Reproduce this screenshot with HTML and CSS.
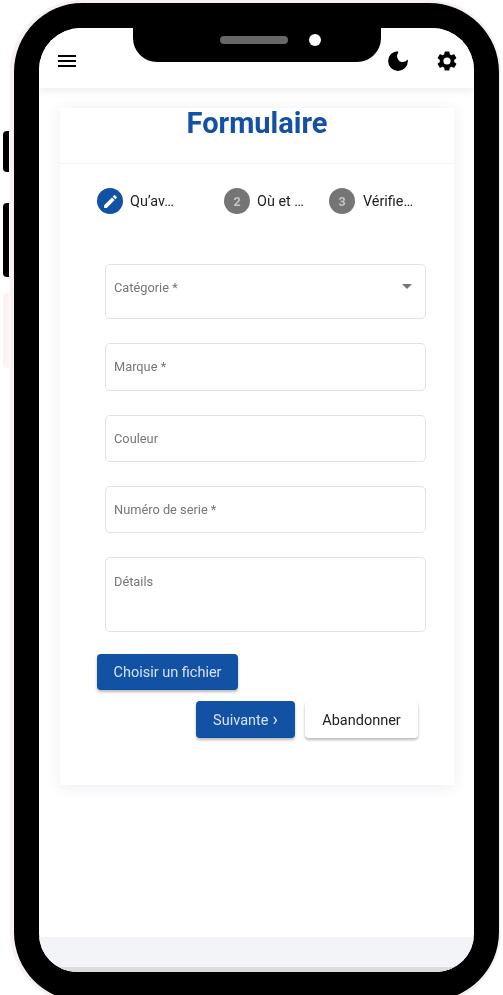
FILE: index.html
```html
<!DOCTYPE html>
<html lang="fr">
<head>
<meta charset="utf-8">
<title>Formulaire</title>
<link rel="stylesheet" href="styles.css">
</head>
<body>
<div class="device">
  <span class="side side-a"></span>
  <span class="side side-b"></span>
  <span class="side side-c"></span>
  <div class="notch"><span class="speaker"></span><span class="camera"></span></div>
  <div class="screen">
    <header class="topbar">
      <svg class="icon" viewBox="0 0 24 24"><path d="M3 18h18v-2H3v2zm0-5h18v-2H3v2zm0-7v2h18V6H3z"/></svg>
      <div class="topbar-right">
        <svg class="icon" viewBox="0 0 24 24"><path d="M12 2.2a9.9 9.9 0 1 0 9.9 9.9c0-.5-.04-1-.11-1.5a5.9 5.9 0 0 1-4.8 2.4 5.9 5.9 0 0 1-4.6-9.6c-.13-.2-.26-.2-.39-.2z"/></svg>
        <svg class="icon" viewBox="0 0 24 24"><path d="M19.14 12.94c.04-.3.06-.61.06-.94s-.02-.64-.07-.94l2.03-1.58a.49.49 0 0 0 .12-.61l-1.92-3.32a.49.49 0 0 0-.59-.22l-2.39.96c-.5-.38-1.03-.7-1.62-.94l-.36-2.54a.48.48 0 0 0-.48-.41h-3.84a.47.47 0 0 0-.47.41l-.36 2.54c-.59.24-1.13.57-1.62.94l-2.39-.96a.49.49 0 0 0-.59.22L2.74 8.87a.47.47 0 0 0 .12.61l2.03 1.58c-.05.3-.09.63-.09.94s.02.64.07.94l-2.03 1.58a.49.49 0 0 0-.12.61l1.92 3.32c.12.22.37.29.59.22l2.39-.96c.5.38 1.03.7 1.62.94l.36 2.54c.05.24.24.41.48.41h3.84c.24 0 .44-.17.47-.41l.36-2.54c.59-.24 1.13-.56 1.62-.94l2.39.96c.22.08.47 0 .59-.22l1.92-3.32a.47.47 0 0 0-.12-.61l-2.01-1.58zM12 15.6A3.6 3.6 0 1 1 12 8.4a3.6 3.6 0 0 1 0 7.2z"/></svg>
      </div>
    </header>
    <main class="card">
      <h1 class="title">Formulaire</h1>
      <div class="stepper">
        <div class="step step-one">
          <span class="badge badge-active"><svg class="pencil" viewBox="0 0 24 24"><path d="M3 17.25V21h3.75L17.81 9.94l-3.75-3.75L3 17.25zM20.71 7.04a1 1 0 0 0 0-1.41l-2.34-2.34a1 1 0 0 0-1.41 0l-1.83 1.83 3.75 3.75 1.83-1.83z"/></svg></span>
          <span class="step-label">Qu’av…</span>
        </div>
        <div class="step step-two">
          <span class="badge">2</span>
          <span class="step-label">Où et …</span>
        </div>
        <div class="step step-three">
          <span class="badge">3</span>
          <span class="step-label">Vérifie…</span>
        </div>
      </div>
      <form class="form">
        <div class="field field-select">Catégorie *<span class="caret"></span></div>
        <div class="field field-marque">Marque *</div>
        <div class="field field-text">Couleur</div>
        <div class="field field-text">Numéro de serie *</div>
        <div class="field field-area">Détails</div>
      </form>
      <div class="file-row"><span class="btn btn-primary btn-file">Choisir un fichier</span></div>
      <div class="actions">
        <span class="btn btn-primary btn-next">Suivante <span class="chevron">›</span></span>
        <span class="btn btn-plain">Abandonner</span>
      </div>
    </main>
    <footer class="footer"></footer>
  </div>
</div>
</body>
</html>
```

FILE: styles.css
```css
* { box-sizing: border-box; }

html, body {
  margin: 0;
  height: 995px;
  overflow: hidden;
  background: #fff;
  font-family: Roboto, "Liberation Sans", sans-serif;
}

.device {
  position: relative;
  width: 491px;
  height: 1004px;
  margin-left: 10px;
  padding: 25px;
  background: #000;
  border: 3px solid #f6f0ef;
  border-width: 3px 2px 3px 4px;
  border-radius: 72px;
  filter: blur(.35px);
}

.side {
  position: absolute;
  left: -11px;
  width: 6px;
  background: #000;
  border-radius: 4px 0 0 4px;
}
.side-a { top: 128px; height: 41px; }
.side-b { top: 200px; height: 74px; }
.side-c { top: 290px; height: 75px; background: #fbf4f2; }

.notch {
  position: absolute;
  top: 25px;
  left: 119px;
  z-index: 2;
  width: 248px;
  height: 34px;
  display: flex;
  align-items: flex-start;
  background: #000;
  border-radius: 0 0 24px 24px;
}
.speaker {
  width: 68px;
  height: 8px;
  margin: 8px 0 0 87px;
  background: #666;
  border-radius: 4px;
}
.camera {
  width: 12px;
  height: 12px;
  margin: 6px 0 0 21px;
  background: #fff;
  border-radius: 50%;
}

.screen {
  display: flex;
  flex-direction: column;
  width: 435px;
  height: 944px;
  overflow: hidden;
  background: #fff;
  border-radius: 42px 42px 38px 38px;
}

.topbar {
  position: relative;
  display: flex;
  flex: none;
  justify-content: space-between;
  height: 60px;
  padding: 21px 15px 0 16px;
  background: #fff;
  box-shadow: 0 3px 8px rgba(40, 50, 90, .09);
}
.topbar-right { display: flex; gap: 25px; }
.icon { width: 24px; height: 24px; fill: #000; }

.card {
  flex: none;
  width: 394px;
  height: 677px;
  margin: 20px 0 0 21px;
  background: #fff;
  box-shadow: 0 2px 14px rgba(50, 60, 120, .09);
}

.title {
  height: 56px;
  margin: 0;
  border-bottom: 1px solid #f2f3f6;
  color: #1251a3;
  font-size: 29px;
  font-weight: 700;
  line-height: 31px;
  text-align: center;
}

.stepper {
  display: flex;
  padding: 24px 0 0 37px;
  color: #222;
  font-size: 14.4px;
}
.step { display: flex; align-items: center; gap: 7px; }
.step-one { width: 127px; }
.step-two { width: 105px; }
.step-three { gap: 8px; }
.badge {
  display: flex;
  flex: none;
  align-items: center;
  justify-content: center;
  width: 26px;
  height: 26px;
  border-radius: 50%;
  background: #757575;
  color: #c4c4c4;
  font-size: 12.5px;
  font-weight: 700;
}
.badge-active { background: #1251a3; }
.pencil { width: 17px; height: 17px; fill: #fff; }

.form {
  display: flex;
  flex-direction: column;
  gap: 24px;
  padding: 50px 28px 0 45px;
}
.field {
  position: relative;
  padding: 15px 8px 0;
  border: 1px solid #e2e2e2;
  border-radius: 5px;
  background: #fff;
  color: #777;
  font-size: 12.8px;
  line-height: 16px;
}
.field-select { height: 55px; }
.field-marque { height: 48px; }
.field-text { height: 47px; }
.field-area { height: 75px; padding-top: 16px; }
.caret {
  position: absolute;
  top: 19px;
  right: 13px;
  border: 5.5px solid transparent;
  border-top-color: #757575;
  border-bottom: 0;
}

.btn {
  display: inline-flex;
  align-items: center;
  justify-content: center;
  gap: 4px;
  border-radius: 4px;
  font-size: 14.5px;
  box-shadow: 0 2px 3px rgba(0, 0, 0, .28);
}
.btn-primary { background: #1251a3; color: #d5e2f2; }
.btn-plain { width: 113px; height: 37px; padding-top: 1px; background: #fff; color: #222; }
.btn-file { width: 141px; height: 36px; }
.btn-next { width: 99px; height: 37px; padding-top: 1px; }
.chevron { margin-bottom: 3px; font-size: 18px; line-height: 14px; }
.file-row { display: flex; padding: 22px 0 0 37px; }
.actions {
  display: flex;
  gap: 10px;
  padding: 11px 0 0 136px;
}

.footer {
  flex: none;
  height: 35px;
  margin-top: auto;
  border-bottom: 5px solid #dcdcdc;
  background: #f3f4f8;
}
```
